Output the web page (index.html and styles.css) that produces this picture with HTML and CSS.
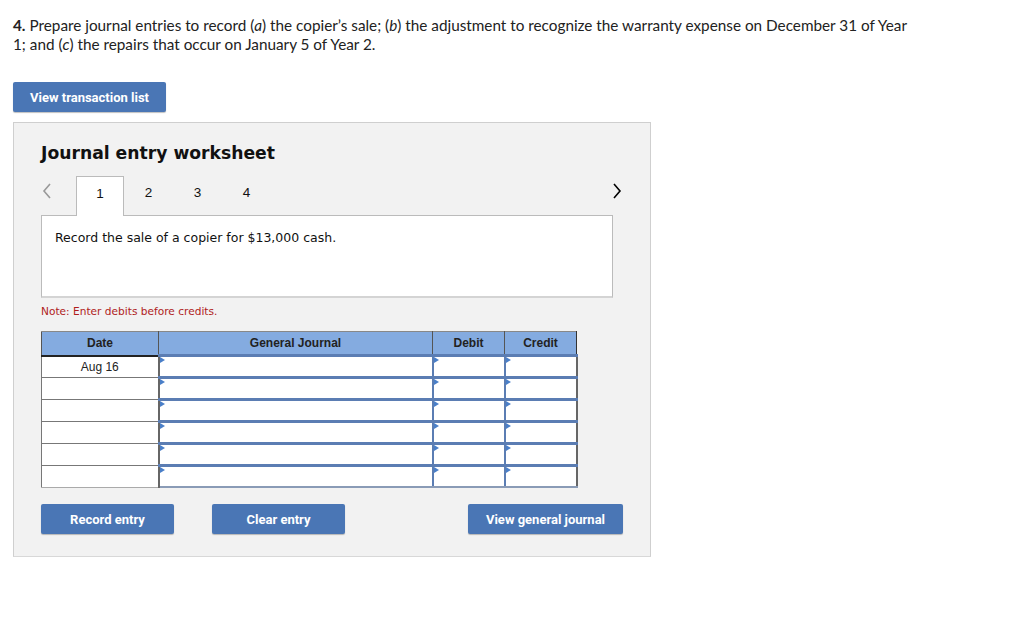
FILE: index.html
```html
<!DOCTYPE html>
<html>
<head>
<meta charset="utf-8">
<link rel="stylesheet" href="styles.css">
</head>
<body>
<p class="question"><b>4.</b> Prepare journal entries to record (<i>a</i>) the copier’s sale; (<i>b</i>) the adjustment to recognize the warranty expense on December 31 of Year<br>1; and (<i>c</i>) the repairs that occur on January 5 of Year 2.</p>
<button class="btn btn-list">View transaction list</button>
<div class="panel">
  <h2 class="title">Journal entry worksheet</h2>
  <div class="tabs">
    <span class="arrow arrow-left">
      <svg width="10" height="16" viewBox="0 0 10 16"><path d="M8 1 L2 8 L8 15" fill="none" stroke="#999" stroke-width="1.6"/></svg>
    </span>
    <span class="tab active">1</span>
    <span class="tab">2</span>
    <span class="tab">3</span>
    <span class="tab">4</span>
    <span class="spacer"></span>
    <span class="arrow arrow-right">
      <svg width="10" height="16" viewBox="0 0 10 16"><path d="M2 1 L8 8 L2 15" fill="none" stroke="#000" stroke-width="1.6"/></svg>
    </span>
  </div>
  <div class="desc">Record the sale of a copier for $13,000 cash.</div>
  <p class="note">Note: Enter debits before credits.</p>
  <table class="journal">
    <thead>
      <tr><th class="c-date">Date</th><th class="c-gj">General Journal</th><th class="c-dr">Debit</th><th class="c-cr">Credit</th></tr>
    </thead>
    <tbody>
      <tr><td class="date">Aug 16</td><td class="inp"></td><td class="inp"></td><td class="inp"></td></tr>
      <tr><td class="date"></td><td class="inp"></td><td class="inp"></td><td class="inp"></td></tr>
      <tr><td class="date"></td><td class="inp"></td><td class="inp"></td><td class="inp"></td></tr>
      <tr><td class="date"></td><td class="inp"></td><td class="inp"></td><td class="inp"></td></tr>
      <tr><td class="date"></td><td class="inp"></td><td class="inp"></td><td class="inp"></td></tr>
      <tr><td class="date"></td><td class="inp"></td><td class="inp"></td><td class="inp"></td></tr>
    </tbody>
  </table>
  <div class="actions">
    <button class="btn btn-record">Record entry</button>
    <button class="btn btn-clear">Clear entry</button>
    <span class="spacer"></span>
    <button class="btn btn-view">View general journal</button>
  </div>
</div>
</body>
</html>
```
FILE: styles.css
```css
html, body {
  margin: 0;
  padding: 0;
  background: #fff;
}
body {
  font-family: Lato, "Liberation Sans", sans-serif;
  color: #222;
}
.question {
  margin: 0;
  padding: 16px 13px 0 13px;
  font-size: 15.3px;
  line-height: 19px;
}
.question b { font-weight: 700; }
.btn {
  display: block;
  border: none;
  border-radius: 2px;
  background: #4a76b5;
  color: #fff;
  font-family: Roboto, "Liberation Sans", sans-serif;
  font-weight: 700;
  font-size: 13px;
  height: 30px;
  padding: 0;
  box-shadow: 0 1px 1px rgba(0,0,0,0.25);
}
.btn-list {
  margin: 28px 0 0 13px;
  width: 153px;
}
.panel {
  margin: 10px 0 0 13px;
  width: 609px;
  height: 433px;
  padding: 0 0 0 27px;
  background: #f2f2f2;
  border: 1px solid #cfcfcf;
  border-bottom-color: #d8d8d8;
}
.title {
  margin: 19px 0 0 0;
  font-family: Verdana, "DejaVu Sans", sans-serif;
  font-size: 17.2px;
  font-weight: 700;
  color: #111;
  line-height: 22px;
}
.tabs {
  display: flex;
  align-items: stretch;
  height: 39px;
  margin-top: 12px;
  width: 583px;
  font-family: Arial, "Liberation Sans", sans-serif;
  font-size: 13.5px;
  color: #111;
}
.arrow {
  display: flex;
  align-items: center;
  padding-bottom: 10px;
}
.arrow-left { width: 34px; padding-left: 1px; }
.arrow-right { width: 12px; }
.tab {
  width: 49px;
  display: flex;
  align-items: center;
  justify-content: center;
  padding-bottom: 6px;
  box-sizing: border-box;
}
.tab.active {
  width: 48px;
  background: #fff;
  border: 1px solid #bbb;
  border-bottom: none;
  margin-bottom: -1px;
  position: relative;
  z-index: 1;
}
.spacer { flex: 1; }
.desc {
  width: 557px;
  height: 66px;
  background: #fff;
  border: 1px solid #bbb;
  border-bottom: 2px solid #d4d4d4;
  padding: 14px 0 0 13px;
  font-family: Verdana, "DejaVu Sans", sans-serif;
  font-size: 12.5px;
  color: #111;
}
.note {
  margin: 5px 0 0 0;
  font-family: Verdana, "DejaVu Sans", sans-serif;
  font-size: 10.6px;
  color: #b01c1c;
  line-height: 16px;
}
.journal {
  margin-top: 12px;
  border-collapse: collapse;
  width: 536px;
  font-family: Arial, "Liberation Sans", sans-serif;
  font-size: 12px;
  table-layout: fixed;
}
.journal th {
  background: #84abe0;
  color: #222;
  font-weight: 700;
  height: 22px;
  padding: 0;
  border: 1px solid #555;
  border-bottom: 2px solid #222;
  border-top-color: #888;
}
.journal th.c-date { width: 116px; }
.journal th.c-gj { width: 273px; border-left-color: #333; }
.journal th.c-dr { width: 71px; border-left-color: #222; }
.journal th.c-cr { width: 71px; border-left-color: #222; border-right-color: #333; }
.journal td {
  height: 19px;
  padding: 0;
}
.journal td.date {
  background: #fff;
  border: 1px solid #777;
  border-right: 2px solid #666;
  text-align: center;
  color: #222;
  font-size: 12px;
  vertical-align: top;
  padding-top: 3px;
  height: 16px;
}
.journal tr:last-child td.date { border-bottom-color: #aaa; }
.journal td.inp {
  background: #fff;
  border: 2px solid #5b7db3;
  border-top-width: 3px;
  position: relative;
}
.journal td.inp::before {
  content: "";
  position: absolute;
  left: 0;
  top: 0;
  border-left: 5px solid #4a7fc8;
  border-top: 3px solid transparent;
  border-bottom: 3px solid transparent;
}
.journal tr:last-child td.inp { border-bottom-color: #8a9bb6; }
.journal tbody td.inp:last-child { border-right-color: #666; }
.actions {
  display: flex;
  width: 582px;
  margin-top: 16px;
}
.btn-record { width: 133px; }
.btn-clear { width: 133px; margin-left: 38px; }
.btn-view { width: 155px; }
```
